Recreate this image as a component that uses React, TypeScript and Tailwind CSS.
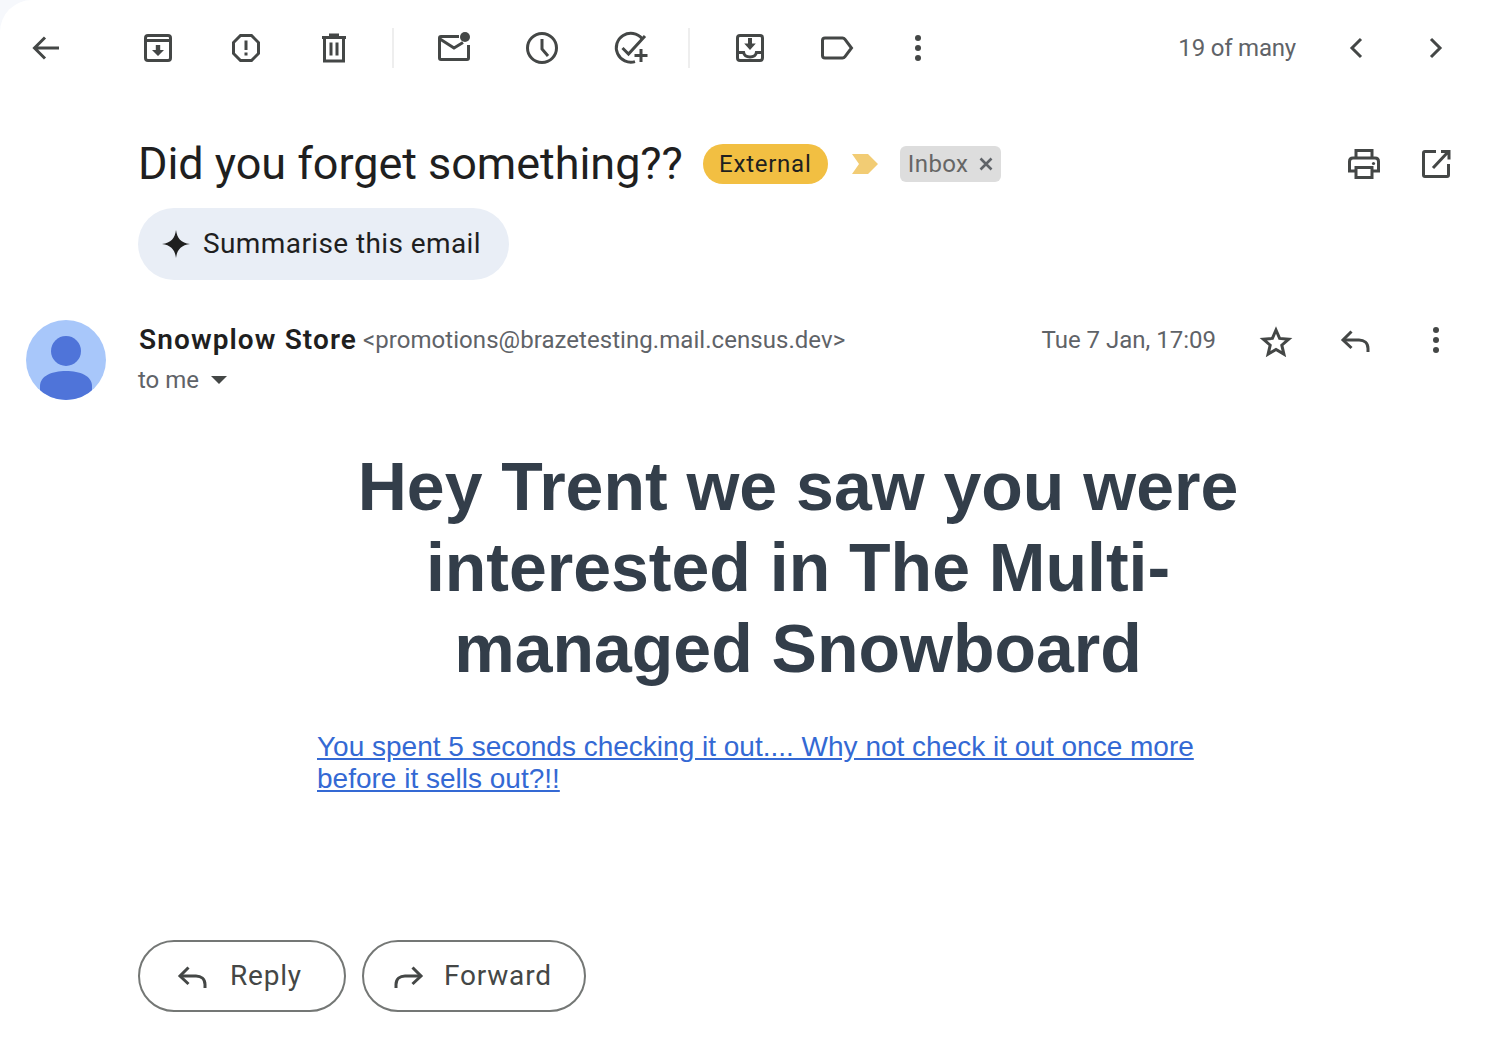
const ink = "#444746";

function Icon({ children, className = "" }: { children: React.ReactNode; className?: string }) {
    return (
        <svg
            viewBox="0 0 40 40"
            fill="none"
            stroke={ink}
            strokeWidth="3"
            className={`w-10 h-10 shrink-0 ${className}`}
        >
            {children}
        </svg>
    );
}

const BackIcon = () => (
    <Icon>
        <path d="M33 20H9M19 9.500 8.500 20 19 30.500" />
    </Icon>
);
const ArchiveIcon = () => (
    <Icon>
        <rect x="7.500" y="7.500" width="25" height="25" rx="2.500" />
        <path d="M7.500 12.500h25" />
        <path d="M17.800 17h4.400v5h3.800L20 28l-6-6h3.800z" fill={ink} stroke="none" />
    </Icon>
);
const ReportIcon = () => (
    <Icon>
        <path d="M14.500 7.500h11l7 7v11l-7 7h-11l-7-7v-11z" />
        <path d="M20 12.500v9.500M20 24.500v3" />
    </Icon>
);
const DeleteIcon = () => (
    <Icon>
        <path d="M8 9.500h24M15 7h10" />
        <path d="M10.500 9.500V33h19V9.500" />
        <path d="M17 14.500v13M23 14.500v13" />
    </Icon>
);
const UnreadIcon = () => (
    <Icon>
        <path d="M25 8.500H7q-1.500 0-1.500 1.500v20q0 1.500 1.500 1.500h26q1.500 0 1.500-1.500V17" />
        <path d="M6 11l14 9 9-5.500" />
        <circle cx="31" cy="9" r="5" fill={ink} stroke="none" />
    </Icon>
);
const ClockIcon = () => (
    <Icon>
        <circle cx="20" cy="20" r="14.500" />
        <path d="M20 11v10l6 7" />
    </Icon>
);
const AddTaskIcon = () => (
    <Icon>
        <path d="M32 10.500A14.500 14.500 0 1 0 25 33.600" />
        <path d="M12.500 20l6 6L35 8" />
        <path d="M31 21v13M24.500 27.500h13" />
    </Icon>
);
const MoveIcon = () => (
    <Icon>
        <rect x="7.500" y="7.500" width="25" height="25" rx="2.500" />
        <path d="M7.500 24.500h6.100c.5 2.500 3 4.500 6.400 4.500s5.900-2 6.400-4.500h6.100" />
        <path d="M18 10h4v5.500h3.800L20 22l-5.800-6.500H18z" fill={ink} stroke="none" />
    </Icon>
);
const LabelIcon = () => (
    <Icon>
        <path d="M7 10q-2.500 0-2.500 2.500v15Q4.500 30 7 30h17.500q1.500 0 2.500-1.300L33.500 20 27 11.300Q26 10 24.500 10z" />
    </Icon>
);
const MoreIcon = () => (
    <Icon>
        <circle cx="20" cy="10" r="3" fill={ink} stroke="none" />
        <circle cx="20" cy="20" r="3" fill={ink} stroke="none" />
        <circle cx="20" cy="30" r="3" fill={ink} stroke="none" />
    </Icon>
);
const ChevronLeft = () => (
    <Icon>
        <path d="M25 11 16 20l9 9" />
    </Icon>
);
const ChevronRight = () => (
    <Icon>
        <path d="M15 11l9 9-9 9" />
    </Icon>
);
const PrintIcon = () => (
    <Icon>
        <path d="M12 14V6.500h16V14" />
        <path d="M12 27H5.500V17.500q0-3.500 3.500-3.500h22q3.500 0 3.500 3.500V27H28" />
        <path d="M12 23.500h16v10H12z" />
        <circle cx="29.500" cy="19.500" r="1.600" fill={ink} stroke="none" />
    </Icon>
);
const OpenIcon = () => (
    <Icon>
        <path d="M20 7.500H9q-1.500 0-1.500 1.500v22q0 1.500 1.500 1.500h22q1.500 0 1.500-1.500V20" />
        <path d="M32 8 17 24M25 7.500h8v8" />
    </Icon>
);
const StarIcon = () => (
    <Icon>
        <path d="M20 10l3.600 8.400 9.100.8-6.900 6 2.100 8.900-7.900-4.700-7.900 4.700 2.100-8.900-6.900-6 9.100-.8z" />
    </Icon>
);
const ReplyIcon = () => (
    <Icon>
        <path d="M15.500 11.500 7 20l8.500 8" />
        <path d="M8 20h15c5 0 9 3 9 8.500V32" />
    </Icon>
);
const ForwardIcon = () => (
    <Icon>
        <path d="M24.500 11.500 33 20l-8.500 8" />
        <path d="M32 20H17c-5 0-9 3-9 8.500V32" />
    </Icon>
);

function Separator() {
    return <div className="w-0.5 h-10 bg-[#eeeeee]" />;
}

function Toolbar() {
    return (
        <div className="h-24 flex items-center pl-[26px]">
            <BackIcon />
            <div className="flex items-center gap-12 ml-[72px]">
                <ArchiveIcon />
                <ReportIcon />
                <DeleteIcon />
            </div>
            <div className="ml-[38px] mr-[40px]">
                <Separator />
            </div>
            <div className="flex items-center gap-12">
                <UnreadIcon />
                <ClockIcon />
                <AddTaskIcon />
            </div>
            <div className="ml-[38px] mr-[40px]">
                <Separator />
            </div>
            <div className="flex items-center gap-12">
                <MoveIcon />
                <LabelIcon />
            </div>
            <div className="ml-10">
                <MoreIcon />
            </div>
            <span className="ml-auto text-[24px] text-[#5f6368] tracking-[-0.2px]">19 of many</span>
            <div className="flex items-center gap-10 ml-10 mr-[50px]">
                <ChevronLeft />
                <ChevronRight />
            </div>
        </div>
    );
}

function SubjectRow() {
    return (
        <div className="mt-[24px] h-[88px] pl-[138px] pr-[50px] flex items-center">
            <h1 className="text-[45px] leading-[56px] text-[#1f1f1f] font-normal tracking-[-0.05px]">
                Did you forget something??
            </h1>
            <span className="ml-5 h-10 w-[125px] rounded-full bg-[#f2bf42] flex items-center justify-center text-[24px] text-[#1f1f1f] tracking-[0.75px]">
                External
            </span>
            <svg viewBox="0 0 26 20" className="ml-6 w-[26px] h-5">
                <path d="M0 0h16l10 10-10 10H0l7-10z" fill="#f2cc74" />
            </svg>
            <span className="ml-[22px] h-9 w-[101px] rounded-md bg-[#dddddd] flex items-center pl-2 text-[24px] text-[#666666] tracking-[0.4px]">
                Inbox
                <svg viewBox="0 0 16 16" className="ml-2.5 w-4 h-4" stroke="#5f6368" strokeWidth="2.6">
                    <path d="M2.500 2.500l11 11M13.500 2.500l-11 11" />
                </svg>
            </span>
            <div className="ml-auto flex items-center gap-8">
                <PrintIcon />
                <OpenIcon />
            </div>
        </div>
    );
}

function SummariseButton() {
    return (
        <div className="pl-[138px]">
            <button className="h-[72px] w-[371px] rounded-full bg-[#e9eef6] flex items-center pl-6 text-[28px] text-[#1f1f1f] tracking-[0.4px]">
                <svg viewBox="0 0 28 28" className="w-7 h-7 mr-[13px] shrink-0">
                    <path d="M14 0c1 8 5 13 14 14-9 1-13 6-14 14-1-8-5-13-14-14 9-1 13-6 14-14z" fill="#1f1f1f" />
                </svg>
                Summarise this email
            </button>
        </div>
    );
}

function Avatar() {
    return (
        <svg viewBox="0 0 80 80" className="w-20 h-20 shrink-0 rounded-full">
            <rect width="80" height="80" fill="#a8c7fa" />
            <circle cx="40" cy="31" r="15" fill="#4f74d9" />
            <path d="M14 80V66c0-10 12-15 26-15s26 5 26 15v14z" fill="#4f74d9" />
        </svg>
    );
}

function SenderRow() {
    return (
        <div className="mt-10 pl-[26px] pr-[50px] flex">
            <Avatar />
            <div className="ml-8 flex-1">
                <div className="h-10 flex items-center">
                    <span className="text-[28px] font-semibold text-[#1f1f1f] tracking-[1.1px] ml-px">Snowplow Store</span>
                    <span className="ml-1.5 text-[24px] text-[#5f6368] tracking-[0.05px]">
                        &lt;promotions@brazetesting.mail.census.dev&gt;
                    </span>
                    <span className="ml-auto text-[24px] text-[#5f6368]">Tue 7 Jan, 17:09</span>
                    <div className="flex items-center gap-10 ml-10">
                        <StarIcon />
                        <ReplyIcon />
                        <MoreIcon />
                    </div>
                </div>
                <div className="h-10 flex items-center text-[24px] text-[#5f6368]">
                    to me
                    <svg viewBox="0 0 16 8" className="ml-3 w-4 h-2">
                        <path d="M0 0h16L8 8z" fill="#444746" />
                    </svg>
                </div>
            </div>
        </div>
    );
}

function Message() {
    return (
        <div className="mt-[46px] ml-[317px] w-[962px] font-['Liberation_Sans',sans-serif]">
            <h2 className="text-[68px] leading-[81px] font-bold text-[#333e4a] text-center">
                Hey Trent we saw you were interested in The Multi-managed Snowboard
            </h2>
            <a href="#" className="block mt-[42px] w-[900px] text-[28px] leading-[32px] text-[#3469d4] underline">
                You spent 5 seconds checking it out.... Why not check it out once more before it sells out?!!
            </a>
        </div>
    );
}

function ActionButton({ icon, label, className }: { icon: React.ReactNode; label: string; className: string }) {
    return (
        <button
            className={`h-[72px] rounded-full border-2 border-[#747775] bg-white flex items-center text-[28px] text-[#444746] tracking-[0.8px] ${className}`}
        >
            {icon}
            {label}
        </button>
    );
}

export default function App() {
    return (
        <div className="relative w-full h-[1058px] overflow-hidden bg-[#f6f8fc] font-['Roboto',sans-serif]">
            <div className="h-full bg-white rounded-tl-[32px]">
                <Toolbar />
                <SubjectRow />
                <SummariseButton />
                <SenderRow />
                <Message />
                <div className="mt-[145px] pl-[138px] flex gap-4">
                    <ActionButton
                        icon={<ReplyIcon />}
                        label="Reply"
                        className="w-[208px] pl-[33px] [&>svg]:mr-[17px]"
                    />
                    <ActionButton
                        icon={<ForwardIcon />}
                        label="Forward"
                        className="w-[224px] pl-[24px] [&>svg]:mr-4"
                    />
                </div>
            </div>
        </div>
    );
}
